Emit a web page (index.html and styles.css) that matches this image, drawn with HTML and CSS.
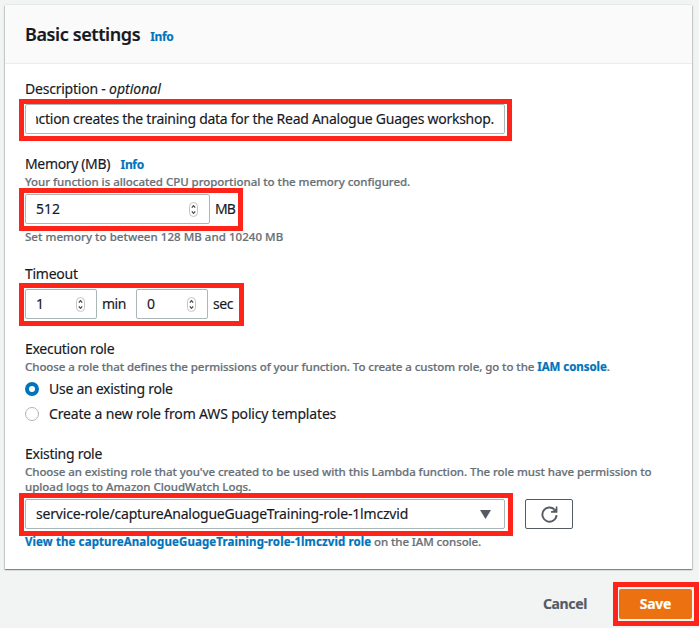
FILE: index.html
```html
<!DOCTYPE html>
<html lang="en">
<head>
<meta charset="utf-8">
<title>Basic settings</title>
<link rel="stylesheet" href="styles.css">
</head>
<body>
<main class="card">
  <header class="card-header">
    <h1>Basic settings</h1>
    <a class="info">Info</a>
  </header>
  <div class="card-body">
    <section class="field">
      <div class="label"><span class="desc">Description - </span><i>optional</i></div>
      <div class="marked marked-desc">
        <div class="input input-wide"><div class="clip"><span>nction creates the training data for the Read Analogue Guages workshop.</span></div></div>
      </div>
    </section>

    <section class="field field-memory">
      <div class="label"><span class="tight">Memory (MB)</span><a class="info">Info</a></div>
      <p class="hint">Your function is allocated CPU proportional to the memory configured.</p>
      <div class="marked marked-memory">
        <div class="input input-memory"><span class="num">512</span>
          <svg class="stepper" viewBox="0 0 9 15"><rect x=".5" y=".5" width="8" height="14" rx="4"/><path d="M2.8 5.6 4.5 3.7 6.2 5.6M2.8 9.4 4.5 11.3 6.2 9.4"/></svg>
        </div>
        <span class="unit unit-mb">MB</span>
      </div>
      <p class="hint hint-below hint-range">Set memory to between 128 MB and 10240 MB</p>
    </section>

    <section class="field field-timeout">
      <div class="label">Timeout</div>
      <div class="marked marked-timeout">
        <div class="input input-time"><span class="num">1</span>
          <svg class="stepper" viewBox="0 0 9 15"><rect x=".5" y=".5" width="8" height="14" rx="4"/><path d="M2.8 5.6 4.5 3.7 6.2 5.6M2.8 9.4 4.5 11.3 6.2 9.4"/></svg>
        </div>
        <span class="unit unit-min">min</span>
        <div class="input input-time"><span class="num">0</span>
          <svg class="stepper" viewBox="0 0 9 15"><rect x=".5" y=".5" width="8" height="14" rx="4"/><path d="M2.8 5.6 4.5 3.7 6.2 5.6M2.8 9.4 4.5 11.3 6.2 9.4"/></svg>
        </div>
        <span class="unit unit-sec">sec</span>
      </div>
    </section>

    <section class="field field-execution">
      <div class="label">Execution role</div>
      <p class="hint hint-long">Choose a role that defines the permissions of your function. To create a custom role, go to the <a>IAM console</a>.</p>
      <div class="option"><span class="radio radio-on"></span><span class="existing">Use an existing role</span></div>
      <div class="option"><span class="radio"></span><span class="create">Create a new role from AWS policy templates</span></div>
    </section>

    <section class="field field-role">
      <div class="label">Existing role</div>
      <p class="hint hint-long">Choose an existing role that you've created to be used with this Lambda function. The role must have permission to<br><span class="upload">upload logs to Amazon CloudWatch Logs.</span></p>
      <div class="select-row">
        <div class="marked marked-role">
          <div class="input input-wide"><span class="role">service-role/captureAnalogueGuageTraining-role-1lmczvid</span>
            <svg class="caret" viewBox="0 0 11 9"><path d="M0 0H11L5.5 9Z"/></svg>
          </div>
        </div>
        <div class="refresh">
          <svg viewBox="0 0 17 17"><path d="M15.6 9.2A7.1 7.1 0 1 1 13.6 3.6"/><path class="tip" d="M16.4 .4V6.8H10V5.2L12.6 4.6 14.8 2.6V.4Z"/></svg>
        </div>
      </div>
      <p class="hint hint-below"><a class="view">View the captureAnalogueGuageTraining-role-1lmczvid role</a> on the IAM console.</p>
    </section>
  </div>
</main>
<footer class="actions">
  <div class="cancel">Cancel</div>
  <div class="marked marked-save"><div class="save">Save</div></div>
</footer>
</body>
</html>
```
FILE: styles.css
```css
* { box-sizing: border-box; }
body {
  margin: 0;
  padding: 5px 7px 0 5px;
  height: 628px;
  overflow: hidden;
  background: #f2f3f3;
  color: #16191f;
  font: 14px/22px "Noto Sans", sans-serif;
  letter-spacing: -0.27px;
  -webkit-text-stroke: .15px;
}
h1, p { margin: 0; }
a { color: #0073bb; font-weight: 700; }

.card {
  height: 564px;
  background: #fff;
  box-shadow: 0 1px 1px 0 rgba(0, 28, 36, .3), 1px 1px 1px 0 rgba(0, 28, 36, .15), -1px 1px 1px 0 rgba(0, 28, 36, .15), 0 -1px 0 0 #e4e8e8;
}
.card-header {
  display: flex;
  align-items: baseline;
  gap: 10px;
  height: 59px;
  padding: 15px 20px 0;
  background: #fafafa;
  border-bottom: 1px solid #eaeded;
}
h1 { font-size: 18px; line-height: 29px; font-weight: 600; letter-spacing: -0.4px; }
.info { font-size: 12px; letter-spacing: -0.35px; }

.card-body { padding: 14px 20px 0; }
.label { white-space: pre; }
.label .desc { letter-spacing: -0.22px; }
.label i { letter-spacing: 0; }
.label .tight { letter-spacing: -0.35px; }
.label .info { margin-left: 10.5px; }
.hint {
  margin-top: -1px;
  color: #687078;
  font-size: 11.5px;
  line-height: 16px;
  font-weight: 500;
  letter-spacing: -.04px;
  white-space: nowrap;
  -webkit-text-stroke: .2px;
}
.hint-long { letter-spacing: -.065px; }
.upload { letter-spacing: -.03px; }
.hint-below { margin-top: 5px; letter-spacing: -.1px; }
.hint-range { letter-spacing: .04px; }
.view { letter-spacing: .1px; }

/* Highlight frames lie over the controls they surround */
.marked { position: relative; display: flex; align-items: center; height: 30px; margin-top: 4px; }
.marked::after { content: ""; position: absolute; inset: -6px -7px -7px -6px; border: 5px solid #ff2419; pointer-events: none; }
.marked-desc { width: 480px; }
.marked-desc::after { top: -5px; }
.marked-memory { width: 211px; }
.marked-timeout { width: 212px; }
.marked-role { width: 480px; margin: 0; }
.marked-role::after { right: -8px; }
.marked-save { margin: 0; }
.marked-save::after { inset: -7px -7px -7px -6px; }

.input {
  display: flex;
  align-items: center;
  justify-content: space-between;
  flex: none;
  height: 30px;
  padding: 0 10px;
  background: #fff;
  border: 1px solid #aab7b8;
  border-radius: 2px;
}
.input-wide { width: 480px; }
.input-memory { width: 185px; }
.input-time { width: 72px; }
.clip {
  display: flex;
  justify-content: flex-end;
  width: 458px;
  overflow: hidden;
  white-space: nowrap;
}
.num { letter-spacing: 0; }
.stepper { width: 9px; height: 15px; margin-right: 1px; fill: #fff; stroke: #c4c4c4; }
.stepper path { fill: none; stroke: #444; stroke-width: 1.2; }
.unit { flex: none; }
.unit-mb { margin-left: 5px; letter-spacing: -1px; }
.unit-min { width: 34px; margin: 0 0 0 5px; letter-spacing: -.5px; }
.unit-sec { margin-left: 5px; letter-spacing: -.4px; }

.field-memory { margin-top: 19px; }
.field-memory .hint:not(.hint-below) { margin-top: -2px; }
.field-timeout { margin-top: 18px; }
.field-execution { margin-top: 19px; }
.field-role { margin-top: 18px; }
.field-role .hint-long { line-height: 15px; }

.option { display: flex; align-items: center; gap: 10px; height: 22px; margin-top: 3px; }
.radio { width: 14px; height: 14px; border: 1px solid #aab7b8; border-radius: 50%; background: #fff; }
.radio-on { border: 4px solid #0073bb; }
.create { letter-spacing: -.16px; }
.role { letter-spacing: -.19px; }

.select-row { display: flex; gap: 20px; margin-top: 5px; }
.caret { width: 11px; height: 9px; margin-right: 3px; fill: #545b64; }
.refresh {
  display: flex;
  align-items: center;
  justify-content: center;
  width: 48px;
  height: 30px;
  border: 1px solid #545b64;
  border-radius: 2px;
}
.refresh svg { width: 17px; height: 17px; fill: none; stroke: #545b64; stroke-width: 1.9; }
.refresh .tip { fill: #545b64; stroke: none; }

.actions {
  display: flex;
  justify-content: flex-end;
  align-items: center;
  gap: 32px;
  height: 30px;
  margin-top: 20px;
  font-weight: 700;
}
.cancel { color: #545b64; letter-spacing: -.37px; }
.save {
  width: 73px;
  height: 30px;
  line-height: 30px;
  text-align: center;
  background: #ec7211;
  border-radius: 2px;
  color: #fff;
}
```
